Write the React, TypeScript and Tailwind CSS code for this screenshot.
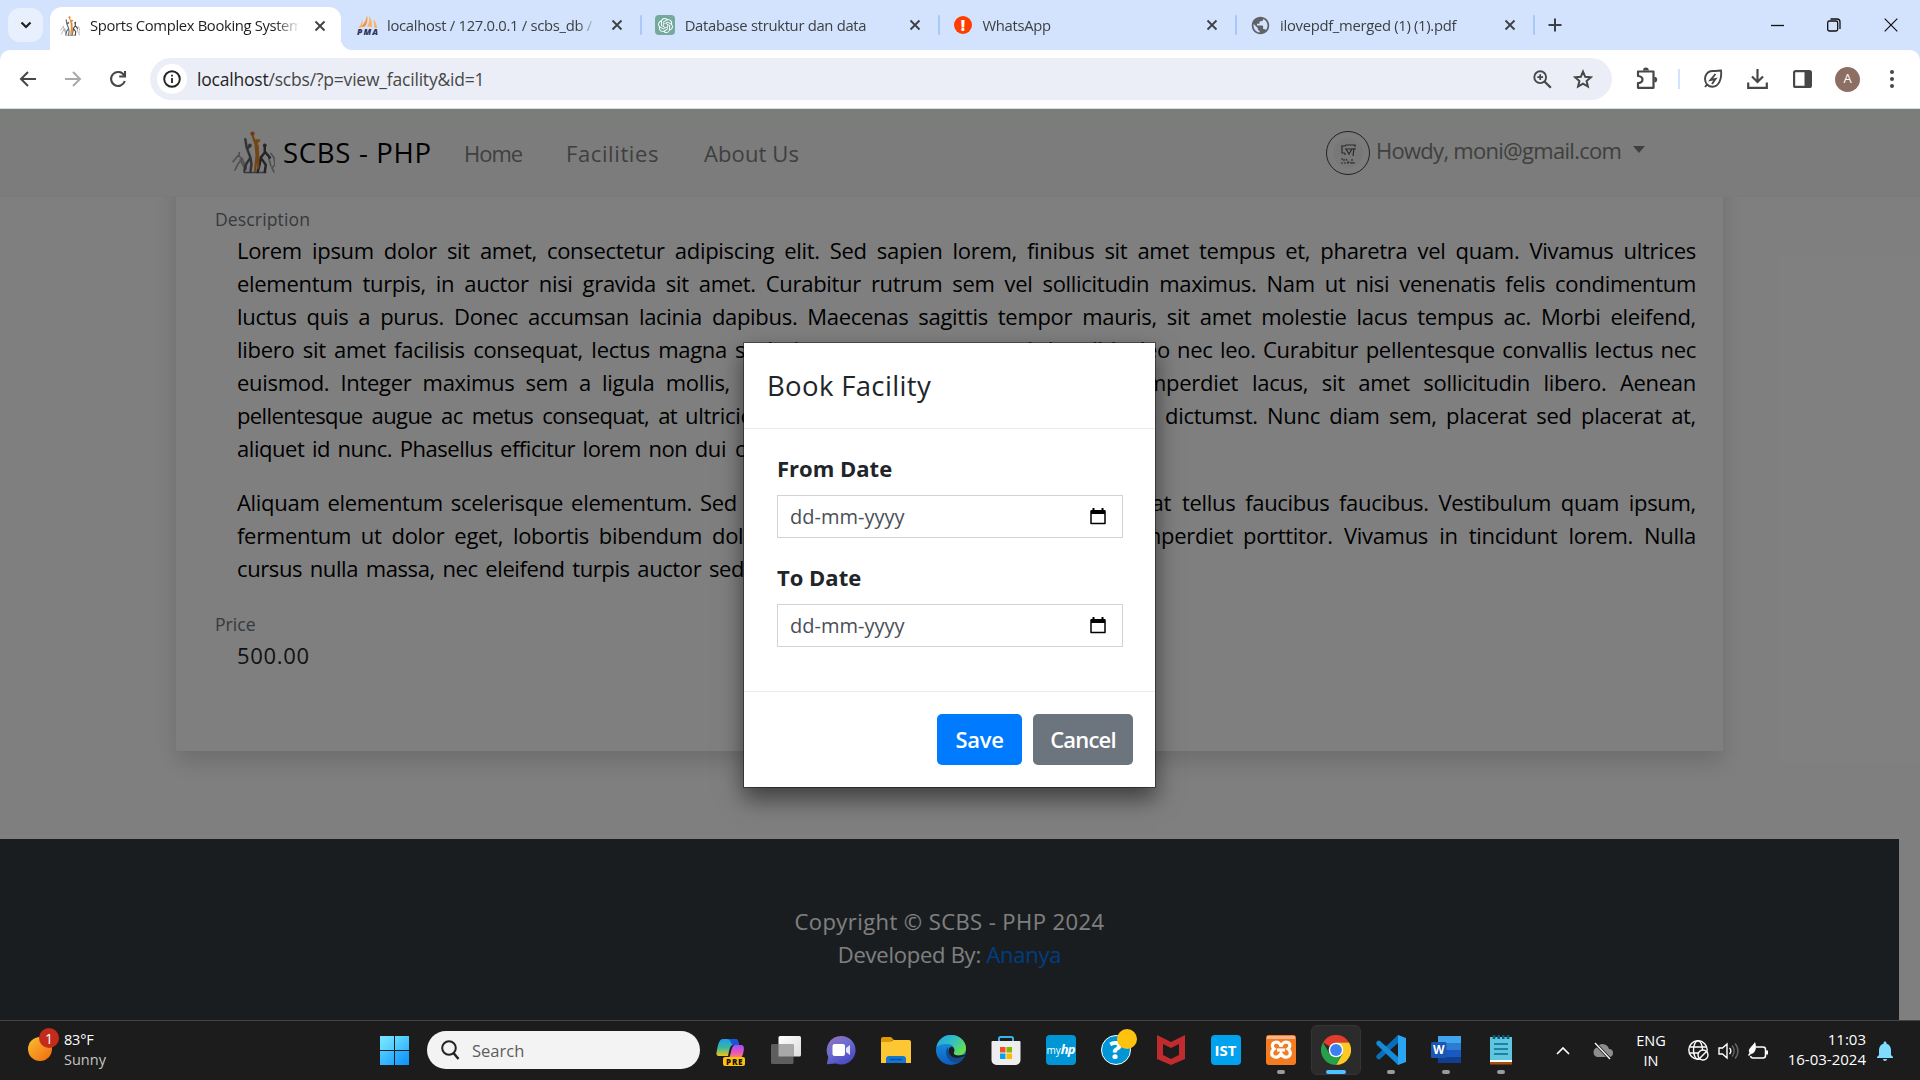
import React from "react";
import { SiOpenai } from "react-icons/si";
import { MdPublic, MdNotifications } from "react-icons/md";

const CloseX = () => (
  <svg width="12" height="12" viewBox="0 0 12 12" className="shrink-0">
    <path d="M1.5 1.5l9 9M10.5 1.5l-9 9" stroke="#3c4043" strokeWidth="1.8" />
  </svg>
);

const Athletes = ({ size }: { size: number }) => (
  <svg width={size} height={size} viewBox="0 0 42 42" className="shrink-0" fill="none" strokeLinecap="round" strokeLinejoin="round">
    <path d="M12 40.500h21" stroke="#6f7387" strokeWidth="1.500" />
    <path d="M1 30l5-6 4 3-4 5-3 6M7 21v3M8 28l4 8M38 22l3 4 1 7-3 3 2 4M10 27l4 10M36 27l2 7" stroke="#a2a2a6" strokeWidth="1.700" />
    <path d="M13 8l1.500 9 3-2M15 18l3 8-4 6-2 7M18 26l1 6-1 8" stroke="#66666b" strokeWidth="2.400" />
    <path d="M32 15v6l-4 5 5 7-1 7M28 26l-1 7-2 7M32 20l5 6" stroke="#4a4a4e" strokeWidth="2.400" />
    <path d="M20 4l3 9 3.500-4M23 13l1 11-1.500 15M25 14l.5 12v10" stroke="#e88b24" strokeWidth="2.200" />
    <circle cx="20" cy="2.6" r="2.100" fill="#e8721f" />
    <circle cx="24" cy="9.500" r="1.600" fill="#e88b24" />
    <circle cx="32" cy="14" r="1.800" fill="#4a4a4e" />
    <circle cx="17.500" cy="14" r="1.800" fill="#66666b" />
  </svg>
);

const Sail = () => (
  <svg width="21" height="20" viewBox="0 0 21 20" className="shrink-0">
    <path d="M10 0c1 5 0 9-2 11.500 0 0-2 .5-4 .5 4-4 5.500-8 6-12z" fill="#f5942e" />
    <path d="M12 1c2.500 3 3.500 7 3 11l-5-.5c2-3 2.500-6 2-10.500zM5 4c0 4-1.500 7-4 8.500h3c2-2 2-5 1-8.500zM16 4c3 3 4 6 4 9l-3-.5c.5-3 0-6-1-8.500z" fill="#f8b36b" />
    <text x="0" y="19.500" fontSize="8.500" fontWeight="800" fontStyle="italic" fontFamily="Open Sans, sans-serif" fill="#33335c" textLength="21">PMA</text>
  </svg>
);

const Tab = ({ icon, title, sep = true }: { icon: React.ReactNode; title: string; sep?: boolean }) => (
  <div className="flex h-[50px] w-[297.700px] shrink-0 items-center">
    <div className="flex w-[21px] shrink-0 items-center justify-center">{icon}</div>
    <span className="ml-[9px] w-[210px] overflow-hidden whitespace-nowrap text-[14.800px] tracking-[-0.3px] text-[#3c4043] [mask-image:linear-gradient(to_right,black_190px,transparent_210px)]">
      {title}
    </span>
    <div className="ml-[14px]"><CloseX /></div>
    <div className={sep ? "ml-[17px] h-5 w-0.5 rounded bg-[#a8c7fa]" : "hidden"} />
  </div>
);

function TabStrip() {
  return (
    <div className="flex h-[50px] items-center bg-[#d3e3fd]">
      <div className="ml-2 flex h-[34px] w-[35px] shrink-0 items-center justify-center rounded-xl bg-[#e9f0fd]">
        <svg width="12" height="8" viewBox="0 0 12 8"><path d="M1.500 1.500L6 6l4.500-4.500" fill="none" stroke="#1f1f1f" strokeWidth="2.200" /></svg>
      </div>
      <div className="ml-[7px] flex h-[43px] w-[291px] shrink-0 items-center self-end rounded-t-xl bg-white pl-[10px] pb-1.5">
        <Athletes size={20} />
        <span className="ml-[10px] w-[210px] overflow-hidden whitespace-nowrap text-[14.800px] tracking-[-0.35px] text-[#1f1f1f] [mask-image:linear-gradient(to_right,black_185px,transparent_210px)]">
          Sports Complex Booking System
        </span>
        <div className="ml-[14px]"><CloseX /></div>
      </div>
      <div className="size-3 shrink-0 self-end bg-[radial-gradient(circle_at_100%_0%,transparent_12px,white_12.500px)]" />
      <div className="ml-[4px] flex">
        <Tab icon={<Sail />} title="localhost / 127.0.0.1 / scbs_db / booking" />
        <Tab
          icon={<div className="flex size-5 items-center justify-center rounded bg-[#74aa9c]"><SiOpenai size={15} color="#fff" /></div>}
          title="Database struktur dan data"
        />
        <Tab
          icon={<div className="flex size-[18px] items-center justify-center rounded-full bg-[#ff3d00] text-[15px] font-black text-white">!</div>}
          title="WhatsApp"
        />
        <Tab icon={<MdPublic size={21} color="#5f6368" />} title="ilovepdf_merged (1) (1).pdf" />
      </div>
      <svg width="14" height="14" viewBox="0 0 14 14" className="shrink-0"><path d="M7 .5v13M.5 7h13" stroke="#3c4043" strokeWidth="2" /></svg>
      <div className="ml-auto flex items-center gap-[43px] pr-[22px]">
        <svg width="13" height="14" viewBox="0 0 13 14"><path d="M0 7.500h13" stroke="#111" strokeWidth="1.300" /></svg>
        <svg width="14" height="14" viewBox="0 0 14 14" fill="none" stroke="#111" strokeWidth="1.300"><rect x=".7" y="3" width="10" height="10" rx="1.800" /><path d="M3.500 1h6.500a3 3 0 013 3v7" /></svg>
        <svg width="14" height="14" viewBox="0 0 14 14"><path d="M.7.7l12.600 12.600M13.300.7L.7 13.300" stroke="#111" strokeWidth="1.200" /></svg>
      </div>
    </div>
  );
}

function Toolbar() {
  return (
    <div className="h-[59px] bg-[#d3e3fd]">
      <div className="flex h-[59px] items-center rounded-t-[10px] border-b border-[#d5e0dc] bg-white pl-[19px]">
        <svg width="18" height="18" viewBox="0 0 18 18" fill="none" stroke="#474747" strokeWidth="2"><path d="M17 9H2.500M9 2L2 9l7 7" /></svg>
        <svg width="18" height="18" viewBox="0 0 18 18" className="ml-[27px]" fill="none" stroke="#a9a9a9" strokeWidth="2"><path d="M1 9h14.500M9 2l7 7-7 7" /></svg>
        <svg width="18" height="18" viewBox="0 0 18 18" className="ml-[27px]" fill="none" stroke="#474747" strokeWidth="2.100"><path d="M15.800 11A7 7 0 1115 5.200M16 1v5.500h-5.800" /></svg>
        <div className="ml-[23px] flex h-[42px] w-[1462px] shrink-0 items-center rounded-full bg-[#ebeef7] pl-[7px]">
          <div className="flex size-[30px] items-center justify-center rounded-full bg-white">
            <svg width="18" height="18" viewBox="0 0 18 18"><circle cx="9" cy="9" r="7.800" fill="none" stroke="#222" strokeWidth="1.900" /><path d="M9 8v5M9 4.700v1.900" stroke="#222" strokeWidth="1.800" /></svg>
          </div>
          <span className="ml-[10px] whitespace-nowrap text-[17.500px] tracking-[-0.2px] text-[#474747]">
            <span className="text-[#1f1f1f]">localhost</span>/scbs/?p=view_facility&amp;id=1
          </span>
          <div className="ml-auto flex items-center gap-[21px] pr-[19px]">
            <svg width="19" height="19" viewBox="0 0 19 19" fill="none" stroke="#474747"><circle cx="7.200" cy="7.200" r="5.900" strokeWidth="1.900" /><path d="M11.500 11.500l6.300 6.300" strokeWidth="2.300" /><path d="M7.200 4.300v5.800M4.300 7.200h5.800" strokeWidth="1.700" /></svg>
            <svg width="20" height="20" viewBox="0 0 20 20" fill="none" stroke="#474747" strokeWidth="2"><path d="M10 2.600l2.200 5.200 5.600.5-4.200 3.700 1.300 5.500-4.900-2.900-4.900 2.900 1.300-5.500-4.200-3.700 5.600-.5z" /></svg>
          </div>
        </div>
        <svg width="23" height="24" viewBox="0 0 23 24" className="ml-[23px]">
          <path d="M3 4.500h15.500v16.300H3v-4.600c3-.3 4.500-1.500 4.500-3.600S6 9.300 3 9z" fill="none" stroke="#474747" strokeWidth="2.200" strokeLinejoin="round" />
          <path d="M8 3.500a2.900 2.900 0 015.800 0zM19.300 9.700a2.900 2.900 0 010 5.800z" fill="#474747" />
        </svg>
        <div className="ml-[20px] h-5 w-0.5 bg-[#d3e3fd]" />
        <svg width="20" height="20" viewBox="0 0 20 20" className="ml-[23px]" fill="none" stroke="#474747" strokeWidth="1.900"><path d="M2 18l2-2.500C0 10 2.500 2 10 2c4 0 5.500-.5 8-.5 1 8-2 16-8.500 16.300-2.500 0-4-.8-5.500-2.300" /><path d="M12.500 5l-5 6 5-1-3.500 5" /></svg>
        <svg width="21" height="22" viewBox="0 0 21 22" className="ml-[24px]" fill="none" stroke="#474747" strokeWidth="2.200"><path d="M10.500 1v12M5 8.500l5.500 5.500L16 8.500M1.200 14.500v5.300h18.600v-5.300" /></svg>
        <svg width="19" height="18" viewBox="0 0 19 18" className="ml-[25px]"><rect x="1.100" y="1.100" width="16.800" height="15.800" rx="1.500" fill="none" stroke="#474747" strokeWidth="2.200" /><path d="M11.500 1h6v16h-6z" fill="#474747" /></svg>
        <div className="ml-[23px] flex size-[25px] items-center justify-center rounded-full bg-[#8d6e63] text-[13px] text-white">A</div>
        <svg width="6" height="18" viewBox="0 0 6 18" className="ml-[29px]" fill="#474747"><circle cx="3" cy="2" r="2" /><circle cx="3" cy="9" r="2" /><circle cx="3" cy="16" r="2" /></svg>
      </div>
    </div>
  );
}

function NavBar() {
  return (
    <div className="flex h-[88px] shrink-0 items-center border-b border-[#f4f4f4] bg-linear-to-b from-[#f6faf6] to-[#f8f8f8] pl-[232px]">
      <Athletes size={43} />
      <span className="ml-[8px] w-[150px] whitespace-nowrap text-[27.500px] tracking-[0.7px] text-black">SCBS - PHP</span>
      <span className="ml-[31px] w-[102px] whitespace-nowrap pt-0.5 text-[22px] tracking-[-1px] text-[#7f7f7f]">Home</span>
      <span className="w-[138px] whitespace-nowrap pt-0.5 text-[22px] tracking-[0.6px] text-[#7f7f7f]">Facilities</span>
      <span className="w-[100px] whitespace-nowrap pt-0.5 text-[22px] tracking-[0.1px] text-[#7f7f7f]">About Us</span>
      <div className="ml-[522px] flex size-11 shrink-0 items-center justify-center rounded-full border-[1.500px] border-[#444]">
        <div className="flex size-[30px] items-center justify-center rounded-full bg-[#f1f1f1]">
          <svg width="17" height="24" viewBox="0 0 17 24" fill="none" stroke="#555" strokeWidth="1.200"><path d="M1 5h4l1-1h9v2M2 5v7h3M5 8h11M14 7l-1 8M6 8l3 5 3-5M5 12v2" /><path d="M1 18h3v3M6 18l2 3h2M12 18v4h3M1 22h14" strokeDasharray="2 1" /></svg>
        </div>
      </div>
      <span className="ml-[6px] mb-1 w-[251px] whitespace-nowrap text-[22px] tracking-[-0.72px] text-[#7f7f7f]">Howdy, moni@gmail.com</span>
      <svg width="12" height="7" viewBox="0 0 12 7" className="mb-1.5 ml-1.5"><path d="M0 0h12L6 7z" fill="#7f7f7f" /></svg>
    </div>
  );
}

const Seg = ({ children, className }: { children: string; className: string }) => (
  <span className={"shrink-0 whitespace-nowrap [text-align-last:justify] " + className}>{children}</span>
);

function Facility() {
  return (
    <div className="-mt-10 ml-[176px] h-[594px] w-[1547px] bg-white pl-[39px] pt-[49px] shadow-[0_11px_22px_rgba(0,0,0,0.15)]">
      <div className="h-[28px] text-[17.600px] leading-[27px] tracking-[0.1px] text-[#6c757d]">Description</div>
      <div className="ml-[22px] w-[1459px] text-[22px] leading-[33px] tracking-[-0.3px] text-black">
        <div className="flex"><Seg className="w-full">Lorem ipsum dolor sit amet, consectetur adipiscing elit. Sed sapien lorem, finibus sit amet tempus et, pharetra vel quam. Vivamus ultrices</Seg></div>
        <div className="flex"><Seg className="w-full">elementum turpis, in auctor nisi gravida sit amet. Curabitur rutrum sem vel sollicitudin maximus. Nam ut nisi venenatis felis condimentum</Seg></div>
        <div className="flex"><Seg className="w-full">luctus quis a purus. Donec accumsan lacinia dapibus. Maecenas sagittis tempor mauris, sit amet molestie lacus tempus ac. Morbi eleifend,</Seg></div>
        <div className="flex">
          <Seg className="w-[490px]">libero sit amet facilisis consequat, lectus magna</Seg>
          <Seg className="ml-[8px] w-[435px]">scelerisque nunc, eget sagittis nibh leo</Seg>
          <Seg className="ml-auto w-[519px]">nec leo. Curabitur pellentesque convallis lectus nec</Seg>
        </div>
        <div className="flex">
          <Seg className="w-[493px]">euismod. Integer maximus sem a ligula mollis,</Seg>
          <Seg className="ml-[18px] w-[490px]">vitae aliquam nisi varius. Sed imperdiet</Seg>
          <Seg className="ml-auto w-[444px]">lacus, sit amet sollicitudin libero. Aenean</Seg>
        </div>
        <div className="flex">
          <Seg className="w-[440px] tracking-[-0.6px]">pellentesque augue ac metus consequat, at</Seg>
          <Seg className="ml-[8px] w-[471px]">ultricies nunc. In hac habitasse platea</Seg>
          <Seg className="ml-auto w-[531px]">dictumst. Nunc diam sem, placerat sed placerat at,</Seg>
        </div>
        <div className="flex gap-[9px]">
          <Seg className="w-[489px] tracking-[-0.45px]">aliquet id nunc. Phasellus efficitur lorem non dui</Seg>
          <Seg className="w-[120px]">consectetur.</Seg>
        </div>
        <div className="mt-[21px] flex">
          <Seg className="w-[500px]">Aliquam elementum scelerisque elementum. Sed</Seg>
          <Seg className="ml-[16px] w-[418px]">euismod nisi vel magna pulvinar, at</Seg>
          <Seg className="ml-auto w-[514px]">tellus faucibus faucibus. Vestibulum quam ipsum,</Seg>
        </div>
        <div className="flex">
          <Seg className="w-[465px]">fermentum ut dolor eget, lobortis bibendum</Seg>
          <Seg className="ml-[10px] w-[521px]">dolor. Praesent eget nulla sed erat imperdiet</Seg>
          <Seg className="ml-auto w-[453px]">porttitor. Vivamus in tincidunt lorem. Nulla</Seg>
        </div>
        <div className="flex"><Seg className="w-[507px] tracking-[-0.4px]">cursus nulla massa, nec eleifend turpis auctor sed</Seg></div>
      </div>
      <div className="mt-[26px] h-[28px] text-[17.600px] leading-[27px] text-[#6c757d]">Price</div>
      <div className="ml-[22px] text-[22px] leading-[33px] tracking-[0.7px] text-[#212529]">500.00</div>
    </div>
  );
}

const DateField = ({ label }: { label: string }) => (
  <div>
    <div className="h-[33px] text-[22px] font-bold leading-[33px] text-[#212529]">{label}</div>
    <div className="mt-[10px] flex h-[43px] items-center border border-[#ced4da] pl-[12px] pr-[16px]">
      <span className="text-[20px] text-[#495057]">dd-mm-yyyy</span>
      <svg width="16" height="17" viewBox="0 0 16 17" className="ml-auto"><path d="M1 3h14v12.500H1z" fill="none" stroke="#000" strokeWidth="1.500" strokeLinejoin="round" /><path d="M1 2h14v4H1zM2.500 0h2v2h-2zM11.500 0h2v2h-2z" /></svg>
    </div>
  </div>
);

function BookingModal() {
  return (
    <div className="flex h-[446px] w-[413px] flex-col border border-black/40 bg-white bg-clip-padding shadow-[0_11px_22px_rgba(0,0,0,0.5)]">
      <div className="flex h-[86px] items-center border-b border-[#e9ecef] pl-[23px] text-[27.500px] tracking-[0.35px] text-[#212529]">Book Facility</div>
      <div className="flex h-[263px] flex-col gap-[23px] border-b border-[#e9ecef] pl-[33px] pr-[32px] pt-[23px]">
        <DateField label="From Date" />
        <DateField label="To Date" />
      </div>
      <div className="flex gap-[11px] self-end pr-[22px] pt-[22px] text-[22px] font-semibold text-white">
        <button className="h-[51px] w-[85px] rounded-[5px] bg-[#007bff] tracking-[-0.3px]">Save</button>
        <button className="h-[51px] w-[100px] rounded-[5px] bg-[#6c757d] tracking-[-0.8px]">Cancel</button>
      </div>
    </div>
  );
}

const Cell = ({ children, dot = false }: { children: React.ReactNode; dot?: boolean }) => (
  <div className="flex h-full w-[55px] shrink-0 flex-col items-center pt-[14px]">
    {children}
    {dot && <div className="mt-[5px] h-1 w-2 rounded-full bg-[#9a9a9a]" />}
  </div>
);

function Taskbar() {
  return (
    <div className="flex h-[60px] border-t border-[#414446] bg-[#1c1c1c] text-white">
      <div className="relative ml-[28px] mt-[16px] size-[24px] rounded-full bg-linear-to-br from-[#f5c030] to-[#f0640c]">
        <div className="absolute -top-[9px] left-[11px] flex size-5 items-center justify-center rounded-full bg-[#c42b1c] text-[14px]">1</div>
      </div>
      <div className="ml-[12px] w-[100px] pt-[9px] text-[14.500px] leading-[20px]">
        <div className="tracking-[-0.2px]">83°F</div>
        <div className="text-[#c4c4c4]">Sunny</div>
      </div>
      <div className="ml-[216px] mt-[15px] grid size-[29px] grid-cols-2 gap-px">
        <div className="bg-linear-to-br from-[#7be8ff] to-[#4fcbff]" /><div className="bg-linear-to-br from-[#63dbff] to-[#32b6ff]" />
        <div className="bg-linear-to-br from-[#4fcaff] to-[#1fa8ff]" /><div className="bg-linear-to-br from-[#32b4ff] to-[#0a92fd]" />
      </div>
      <div className="ml-[18px] mt-[10px] flex h-[38px] w-[273px] items-center rounded-full bg-[#f3f3f3] pl-[14px]">
        <svg width="19" height="20" viewBox="0 0 19 20" fill="none" stroke="#222" strokeWidth="2"><circle cx="8" cy="8" r="6.800" /><path d="M12.500 13l5 6" strokeWidth="2.500" /></svg>
        <span className="ml-[12px] pt-0.5 text-[16.500px] text-[#5c5c5c]">Search</span>
      </div>
      <div className="ml-[3px] flex">
        <Cell>
          <svg width="30" height="32" viewBox="1 0 30 32">
            <defs>
              <linearGradient id="cpA" x1="0" y1="0" x2="0" y2="1"><stop stopColor="#1f9cf0" /><stop offset=".5" stopColor="#35b8a0" /><stop offset="1" stopColor="#f0c419" /></linearGradient>
              <linearGradient id="cpB" x1="0" y1="0" x2="0" y2="1"><stop stopColor="#a64dff" /><stop offset=".6" stopColor="#e858b8" /><stop offset="1" stopColor="#ff8f4a" /></linearGradient>
            </defs>
            <path d="M8 4h12c3 0 3 2 4 6h-6c-2 0-3 2-4 6l-1 5H5c-4 0-4-2-3-6 1-5 2-11 6-11z" fill="url(#cpA)" />
            <path d="M12 4h8c3 0 3 2 4 6h-6c-2 0-2-6-6-6z" fill="#1a54d8" />
            <path d="M20 10h6c4 0 3 5 2 9-1 3-2 4-4 4H14c2-2 2-13 6-13z" fill="url(#cpB)" />
            <rect x="8" y="22" width="22" height="9" rx="2" fill="#ffc20e" />
            <text x="11" y="29.500" fontSize="8" fontWeight="800" fontFamily="Open Sans, sans-serif" fill="#111" textLength="16.500">PRE</text>
          </svg>
        </Cell>
        <Cell>
          <svg width="30" height="30" viewBox="0 0 30 30">
            <defs><linearGradient id="tv" x1="0" y1="0" x2="1" y2="1"><stop stopColor="#fff" /><stop offset="1" stopColor="#ddd" /></linearGradient></defs>
            <rect x="7.500" y="1" width="22.500" height="20.500" rx="1.500" fill="url(#tv)" /><rect x="0" y="9" width="22.500" height="20" rx="1.500" fill="#5e5e5e" /><path d="M7.500 9h15v12.500h-15z" fill="#a9a9a9" />
          </svg>
        </Cell>
        <Cell>
          <svg width="30" height="30" viewBox="0 0 30 30">
            <defs><linearGradient id="ch" x1="0" y1="0" x2=".6" y2="1"><stop stopColor="#9a72b8" /><stop offset=".5" stopColor="#6c6cd0" /><stop offset="1" stopColor="#4a4ac4" /></linearGradient></defs>
            <path d="M15 1a14.300 14.300 0 11-5 27.600L.8 29.300 2.300 22A14.300 14.300 0 0115 1z" fill="url(#ch)" />
            <rect x="6.500" y="9" width="12.500" height="12" rx="2" fill="#fff" /><path d="M20 13l4-3v10l-4-3z" fill="#e7e2ff" />
          </svg>
        </Cell>
        <Cell>
          <svg width="30" height="30" viewBox="0 0 30 30">
            <path d="M0 4a2 2 0 012-2h8l3 3h-2L9 8H0z" fill="#e19a07" /><path d="M0 7h9l3-2h16a2 2 0 012 2v21H0z" fill="#fcc732" /><path d="M5 28v-4a3 3 0 013-3h14a3 3 0 013 3v4z" fill="#0f78d0" /><path d="M9 24.500h12" stroke="#0a4c97" strokeWidth="1.300" />
          </svg>
        </Cell>
        <Cell>
          <svg width="30" height="30" viewBox="0 0 30 30">
            <defs>
              <linearGradient id="edA" x1="0" y1="0" x2="1" y2=".6"><stop stopColor="#1fa2e8" /><stop offset=".55" stopColor="#33c0c0" /><stop offset="1" stopColor="#66e04b" /></linearGradient>
              <linearGradient id="edB" x1="0" y1="0" x2="0" y2="1"><stop stopColor="#1b9de2" /><stop offset="1" stopColor="#0b5cc0" /></linearGradient>
            </defs>
            <circle cx="15" cy="15" r="15" fill="url(#edB)" />
            <path d="M.5 12C2 4.500 8 0 15 0c9 0 15 6.500 15 13 0 5-3.500 7.500-7.500 7.500-3 0-5.500-1-4.500-3 1.500-3 0-7.500-6-8.500C7 8.500 3 9.500.5 12z" fill="url(#edA)" />
            <path d="M12 12c-4 4-2 14 7 16 4 0 7-3 9-6-8 3-16 0-16-10z" fill="#124a94" />
            <path d="M16 11.500c-4 .5-4.500 6-1 9.500 3 2.500 8 2.500 13 .5l2-2-7 1c-4 0-6-1.500-5-3.500.7-1.700.5-4-2-5.500z" fill="#1c1c1c" />
          </svg>
        </Cell>
        <Cell>
          <svg width="30" height="30" viewBox="0 0 30 30">
            <path d="M8 7V3.500A1.500 1.500 0 019.500 2h11A1.500 1.500 0 0122 3.500V7" fill="none" stroke="#35b5e8" strokeWidth="2" />
            <path d="M.5 7a1 1 0 011-1h27a1 1 0 011 1v18a5 5 0 01-5 5h-19a5 5 0 01-5-5z" fill="#eee" />
            <path d="M9 12h5.500v5.500H9z" fill="#f25022" /><path d="M15.500 12H21v5.500h-5.500z" fill="#7fba00" /><path d="M9 18.500h5.500V24H9z" fill="#00a4ef" /><path d="M15.500 18.500H21V24h-5.500z" fill="#ffb900" />
          </svg>
        </Cell>
        <Cell>
          <div className="flex size-[30px] items-center justify-center rounded-sm bg-[#0096d6] text-[10px] italic"><span className="not-italic">my</span><b className="text-[13px] tracking-[-1px]">hp</b></div>
        </Cell>
        <Cell>
          <div className="relative flex size-[30px] items-center justify-center rounded-full border-[1.500px] border-white bg-[#0096d6] text-[25px] font-extrabold">
            ?
            <div className="absolute -top-[7px] left-[15px] size-5 rounded-full bg-[#ffc20e]" />
          </div>
        </Cell>
        <Cell>
          <svg width="28" height="30" viewBox="0 0 28 30"><path d="M0 0l14 7L28 0v24l-14 6-14-6zM6 9v11l8 4 8-4V9l-8 4z" fill="#c12a2e" fillRule="evenodd" /></svg>
        </Cell>
        <Cell>
          <div className="flex size-[30px] items-center justify-center rounded bg-[#00a2ed] text-[15px] font-bold">IST</div>
        </Cell>
        <Cell dot>
          <svg width="30" height="30" viewBox="0 0 30 30">
            <rect width="30" height="30" rx="3" fill="#f47b20" /><path d="M1 1h28v3H1z" fill="#f8b488" />
            <g fill="none" stroke="#fff" strokeWidth="3.200"><path d="M15 11.500c-1-4-4-5-6.500-4S5.500 12 8 14c-3 2-3 6-.5 7.500s6 .5 7.500-3c1.500 3.500 5 4.500 7.500 3S25 16 22 14c2.500-2 2.500-5.500 0-6.500s-6 0-7 4z" /><path d="M11 15h8" /></g>
          </svg>
        </Cell>
        <div className="mx-[2.500px] mt-[4px] flex size-[50px] flex-col items-center rounded-md border border-[#343434] bg-[#2b2b2b] pt-[9px]">
          <svg width="30" height="30" viewBox="0 0 30 30">
            <path d="M15 15L2 7.500A15 15 0 0128 7.500H15z" fill="#e33b2e" />
            <path d="M15 15L28 7.500A15 15 0 0115 30l6.500-11.200z" fill="#fdc922" />
            <path d="M15 15l6.500 3.800L15 30A15 15 0 012 7.500l6.500 11.300z" fill="#27a04b" />
            <path d="M15 7.500h13L21.500 18.800z" fill="#fdc922" />
            <circle cx="15" cy="15" r="7.300" fill="#fff" /><circle cx="15" cy="15" r="5.900" fill="#3a80f0" />
          </svg>
          <div className="mt-[5px] h-1 w-5 rounded-full bg-[#4cc2ff]" />
        </div>
        <Cell dot>
          <svg width="30" height="30" viewBox="0 0 30 30">
            <path d="M22 0v8L4 24c-1 1-2 .5-3-.5S0 21 1 20z" fill="#0a6fba" /><path d="M22 30v-8L4 6C3 5 2 5.500 1 6.500S0 9 1 10z" fill="#168ad6" /><path d="M22 0l8 3v24l-8 3z" fill="#2aa5f3" />
          </svg>
        </Cell>
        <Cell dot>
          <svg width="30" height="30" viewBox="0 0 30 30">
            <path d="M7 1h23v7H7z" fill="#41a5ee" /><path d="M7 8h23v7H7z" fill="#2b7cd3" /><path d="M7 15h23v7H7z" fill="#185abd" /><path d="M7 22h23v6H7z" fill="#103f91" /><rect y="7" width="15.500" height="16" rx="1.500" fill="#1a56b4" />
            <text x="2" y="19" fontSize="11.500" fontWeight="700" fontFamily="Open Sans, sans-serif" fill="#fff" textLength="11.500" lengthAdjust="spacingAndGlyphs">W</text>
          </svg>
        </Cell>
        <Cell dot>
          <svg width="22" height="30" viewBox="0 0 22 30">
            <path d="M0 2h22v25H0z" fill="#5fc6e0" /><path d="M0 25h22v2H0z" fill="#fff" /><path d="M0 27h22v2.500H0z" fill="#a5510d" />
            <path d="M4 9h14M4 14h14M4 19h14" stroke="#0c6c8c" strokeWidth="1.700" /><path d="M4 0v4M8.700 0v4M13.300 0v4M18 0v4" stroke="#0e5a78" strokeWidth="2.500" />
          </svg>
        </Cell>
      </div>
      <div className="ml-auto flex items-center pr-[26px] text-[15px] leading-[20px]">
        <svg width="14" height="8" viewBox="0 0 14 8"><path d="M1 7l6-6 6 6" fill="none" stroke="#fff" strokeWidth="1.700" /></svg>
        <svg width="21" height="18" viewBox="0 0 21 18" className="ml-[22px]"><path d="M5 15a5 5 0 010-9.500A6.500 6.500 0 0117 7a4 4 0 010 8z" fill="#8d8d8d" /><path d="M3 1l15 16" stroke="#1c1c1c" strokeWidth="3" /><path d="M3 1l15 16" stroke="#fff" strokeWidth="1.300" /></svg>
        <div className="ml-[22px] w-[32px] text-center text-[14.500px]">ENG<br />IN</div>
        <svg width="21" height="21" viewBox="0 0 21 21" className="ml-[21px]" fill="none" stroke="#fff" strokeWidth="1.400"><circle cx="10" cy="10" r="9.200" /><ellipse cx="10" cy="10" rx="4.500" ry="9.200" /><path d="M1.500 7h17M1.500 13h17" /><circle cx="15" cy="15" r="5" fill="#1c1c1c" /><path d="M11.500 18.500l7-7" /></svg>
        <svg width="21" height="18" viewBox="0 0 21 18" className="ml-[9px]" fill="none" stroke="#fff" strokeWidth="1.400"><path d="M1 6h3.500L9 2v14l-4.500-4H1zM11.500 6a4 4 0 010 6" /><path d="M14 3.500a8 8 0 010 11M17 1.500a11 11 0 010 15" stroke="#666" /></svg>
        <svg width="21" height="18" viewBox="0 0 21 18" className="ml-[8px]"><path d="M9 5h7a2.500 2.500 0 012.500 2.500v6A2.500 2.500 0 0116 16H6a2.500 2.500 0 01-2.500-2" fill="none" stroke="#fff" strokeWidth="1.500" /><path d="M19 8.500h2v4h-2zM8 0c2 5 1 11-4 12l-2 2-1-1 1.500-2C0 7 5 5 8 0z" fill="#fff" /></svg>
        <div className="ml-[8px] w-[90px] pb-[3px] text-right">11:03<br /><span>16-03-2024</span></div>
        <MdNotifications size={24} color="#7fdcff" className="ml-[7px] -mr-[3px]" />
      </div>
    </div>
  );
}

export default function App() {
  return (
    <div className="flex h-[1080px] w-[1920px] flex-col overflow-hidden bg-white font-['Open_Sans','Noto_Sans',sans-serif]">
      <TabStrip />
      <Toolbar />
      <div className="relative h-[911px] overflow-hidden bg-white font-['Open_Sans',sans-serif] [font-stretch:90%]">
        <NavBar />
        <div className="flex h-[642px] flex-col overflow-hidden"><Facility /></div>
        <div className="mr-[21px] h-[181px] bg-[#343a40] pt-[66px] text-center text-[22px] leading-[33px] text-white">
          <div className="tracking-[0.42px]">Copyright © SCBS - PHP 2024</div>
          <div className="tracking-[-0.25px]">Developed By: <span className="text-[#007bff]">Ananya</span></div>
        </div>
        <div className="absolute inset-0 bg-black/50 pl-[743px] pt-[233px]"><BookingModal /></div>
      </div>
      <Taskbar />
    </div>
  );
}
